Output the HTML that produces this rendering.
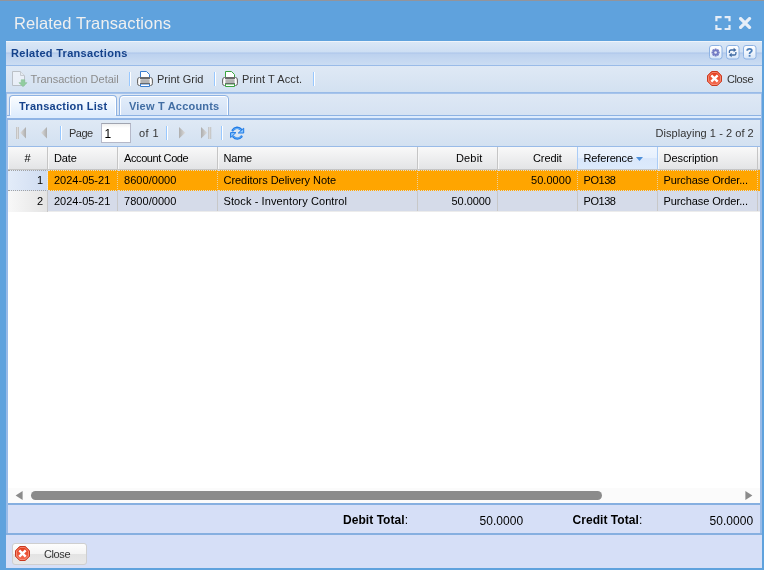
<!DOCTYPE html>
<html><head><meta charset="utf-8">
<style>
*{box-sizing:border-box;margin:0;padding:0}
html,body{width:764px;height:570px;overflow:hidden}
body{background:#5fa2dd;font-family:"Liberation Sans",sans-serif;font-size:11px;color:#000;position:relative}
.abs{position:absolute}
.t{position:absolute;white-space:nowrap;line-height:14px;height:14px;font-size:11px}
#topline{left:0;top:0;width:764px;height:1px;background:#93949b}
#title{left:15px;top:12px;font-size:16.5px;line-height:20px;height:20px;color:#f0f0f0}
#pborder{left:6px;top:41px;width:756px;height:527px;background:#99bbe8}
#phead{left:6px;top:41px;width:756px;height:25px;background:linear-gradient(#dae7f6 0,#cddef3 45%,#b4cbec 46%,#b4cbec 50%,#bcd1ee 51%,#cbddf3 100%);border-top:1px solid #eef4fb;border-bottom:1px solid #99bbe8}
#tbar{left:6px;top:66px;width:756px;height:27px;background:linear-gradient(#dfe9f5,#d3e1f1);border-bottom:1px solid #99bbe8}
.sep{position:absolute;width:2px;height:14px;border-left:1px solid #98c8ff;border-right:1px solid #fff}
#tabstrip{left:7px;top:93px;width:754px;height:26px;background:linear-gradient(#dee8f5,#d4e1f2);border-top:1px solid #a6c3eb}
#tabline{left:7px;top:115px;width:754px;height:5px;background:#deecfd;border-bottom:2px solid #8fb4e5;border-top:1px solid #8db2e3}
.tab{position:absolute;top:95px;height:21px;border:1px solid #8db2e3;border-radius:4px 4px 0 0;box-shadow:inset 1px 1px 0 #fff,inset -1px 0 0 #fff}
#tab1{left:9px;width:108px;background:linear-gradient(#fbfdff,#deecfd);height:21px;border-bottom:0}
#tab1b{left:10px;top:115px;width:106px;height:3px;background:#deecfd}
#tab2{left:119px;width:110px;background:linear-gradient(#e3edfa,#d3e2f6)}
.tabt{font-weight:bold;color:#15428b}
#pager{left:8px;top:120px;width:752px;height:27px;background:linear-gradient(#dfe9f5,#d3e1f1);border-bottom:1px solid #99bbe8}
#pinput{left:101px;top:123px;width:30px;height:20px;background:linear-gradient(#f0f0f0,#fff 4px);border:1px solid #b5b8c8;border-top-color:#a0a4b0}
#grid{left:8px;top:147px;width:752px;height:357px;background:#fff}
#ghead{left:0;top:0;width:752px;height:23px;background:linear-gradient(#f9f9f9,#e3e4e6);border-bottom:1px solid #c5c5c5}
.hc{position:absolute;top:0;height:22px;border-right:1px solid #c5c5c5;border-left:1px solid #f7f7f7}
.hc.sorted{background:linear-gradient(#eff5fe 0,#e6f0fd 50%,#d9e7fb 52%,#dceafc 100%);border-right-color:#aaccf6;border-left:1px solid #aaccf6}
.row{position:absolute;left:0;width:752px;height:21px}
.cell{position:absolute;top:0;height:21px;border-right:1px solid #c8c8c8}
.r2{height:20px}
.r2 .cell{height:20px}
.r2 .cell:first-child{height:21px}
.r2:after{content:"";position:absolute;left:40px;top:20px;width:712px;height:1px;background:#ececec}
.sel .cell{border-right:1px dotted rgba(225,225,225,.7);border-top:1px dotted #dcdcdc;border-bottom:1px dotted #dcdcdc}
.sel .cell:first-child{border-top-color:#a2a2a2;border-bottom-color:#a2a2a2}
#sum{left:8px;top:505px;width:752px;height:28px;background:#d6dff7}
#sumline{left:8px;top:503px;width:752px;height:2px;background:#86afe0}
#bbar{left:6px;top:535px;width:756px;height:33px;background:#d6dff7}
#bline{left:6px;top:533px;width:756px;height:2px;background:#86afe0}
#btn{left:12px;top:543px;width:75px;height:22px;border:1px solid #cfcfcf;border-radius:3px;background:linear-gradient(#fdfdfd 0,#f4f4f4 48%,#e3e3e3 50%,#e8e8e8 100%)}
#tx{position:absolute;left:0;top:0;width:764px;height:570px;will-change:transform}
.b{font-weight:bold}
.g{color:#333}
</style></head><body>
<div id="topline" class="abs"></div>
<div id="pborder" class="abs"></div>
<div id="phead" class="abs"></div>
<div id="tbar" class="abs"></div>
<div class="sep" style="left:129px;top:72px"></div>
<div class="sep" style="left:214px;top:72px"></div>
<div class="sep" style="left:313px;top:72px"></div>
<div id="tabstrip" class="abs"></div>
<div id="tabline" class="abs"></div>
<div id="tab1" class="tab"></div>
<div id="tab2" class="tab"></div>
<div id="tab1b" class="abs"></div>
<div id="pager" class="abs"></div>
<div class="sep" style="left:60px;top:126px"></div>
<div id="pinput" class="abs"></div>
<div class="sep" style="left:166px;top:126px"></div>
<div class="sep" style="left:221px;top:126px"></div>
<div id="grid" class="abs">
 <div id="ghead" class="abs">
  <div class="hc" style="left:0;width:40px"></div>
  <div class="hc" style="left:40px;width:70px"></div>
  <div class="hc" style="left:110px;width:100px"></div>
  <div class="hc" style="left:210px;width:200px"></div>
  <div class="hc" style="left:410px;width:80px"></div>
  <div class="hc" style="left:490px;width:80px"></div>
  <div class="hc sorted" style="left:569px;width:81px"></div>
  <div class="hc" style="left:650px;width:100px"></div>
 </div>
 <div class="row sel" style="top:23px;background:#ffa500"><div class="cell" style="left:0px;width:40px;background:linear-gradient(90deg,#e3ecf9,#cfdcf1)"></div><div class="cell" style="left:40px;width:70px"></div><div class="cell" style="left:110px;width:100px"></div><div class="cell" style="left:210px;width:200px"></div><div class="cell" style="left:410px;width:80px"></div><div class="cell" style="left:490px;width:80px"></div><div class="cell" style="left:570px;width:80px"></div><div class="cell" style="left:650px;width:100px"></div></div>
 <div class="row r2" style="top:44px;background:#d5dbe9"><div class="cell" style="left:0px;width:40px;background:linear-gradient(90deg,#f8f8f8,#e4e4e4)"></div><div class="cell" style="left:40px;width:70px"></div><div class="cell" style="left:110px;width:100px"></div><div class="cell" style="left:210px;width:200px"></div><div class="cell" style="left:410px;width:80px"></div><div class="cell" style="left:490px;width:80px"></div><div class="cell" style="left:570px;width:80px"></div><div class="cell" style="left:650px;width:100px"></div></div>
</div>



<div id="sumline" class="abs"></div>
<div id="sum" class="abs"></div>
<div id="bline" class="abs"></div>
<div id="bbar" class="abs"></div>
<div id="btn" class="abs"></div>
<svg width="0" height="0" style="position:absolute"><defs>
<linearGradient id="gPr" x1="0" x2="1" y1="0" y2="0"><stop offset="0" stop-color="#d8d8d8"/><stop offset=".14" stop-color="#ffffff"/><stop offset=".3" stop-color="#c9c9c9"/><stop offset=".7" stop-color="#c9c9c9"/><stop offset=".86" stop-color="#ffffff"/><stop offset="1" stop-color="#d0d0d0"/></linearGradient>
<linearGradient id="gRed" x1="0" x2="0" y1="0" y2="1"><stop offset="0" stop-color="#e23b1b"/><stop offset="1" stop-color="#f56c52"/></linearGradient>
<linearGradient id="gTool" x1="0" x2="0" y1="0" y2="1"><stop offset="0" stop-color="#ffffff"/><stop offset=".5" stop-color="#f1f6fd"/><stop offset="1" stop-color="#d4e4f8"/></linearGradient>
<linearGradient id="gArr" x1="0" x2="1" y1="0" y2="0"><stop offset="0" stop-color="#dcdcdc"/><stop offset="1" stop-color="#adadad"/></linearGradient>
<linearGradient id="gArrR" x1="1" x2="0" y1="0" y2="0"><stop offset="0" stop-color="#dcdcdc"/><stop offset="1" stop-color="#adadad"/></linearGradient>
<linearGradient id="gBar" x1="0" x2="1" y1="0" y2="0"><stop offset="0" stop-color="#b8b8b8"/><stop offset=".5" stop-color="#dcdcdc"/><stop offset="1" stop-color="#b8b8b8"/></linearGradient>
</defs></svg>
<!-- window tools -->
<svg class="abs" style="left:715px;top:16px" width="16" height="15" viewBox="0 0 16 15"><path d="M1.400 5.200V1.100H6.600M9.600 1.100H14.500V5.200M14.500 8.900V13H9.600M6.600 13H1.400V8.900" fill="none" stroke="#e6eef8" stroke-width="2.200"/></svg>
<svg class="abs" style="left:739px;top:17px" width="13" height="12" viewBox="0 0 13 12"><path d="M1.600 1.550L10.500 10.450M10.500 1.550L1.600 10.450" stroke="#e6eef8" stroke-width="3.300" stroke-linecap="round"/></svg>
<!-- panel tools -->
<svg class="abs" style="left:709px;top:45px" width="14" height="15" viewBox="0 0 14 15"><rect x=".5" y=".5" width="12.500" height="13.500" rx="2.500" fill="url(#gTool)" stroke="#8db2e3"/>
 <g transform="translate(6.600 7.500)"><g fill="#747cc4"><circle r="3"/><g><rect x="-1" y="-4.100" width="2" height="8.200" rx=".5"/><rect x="-4.100" y="-1" width="8.200" height="2" rx=".5"/></g><g transform="rotate(45)"><rect x="-1" y="-4.100" width="2" height="8.200" rx=".5"/><rect x="-4.100" y="-1" width="8.200" height="2" rx=".5"/></g></g><circle r="1.300" fill="#e9edf9"/></g></svg>
<svg class="abs" style="left:726px;top:45px" width="14" height="15" viewBox="0 0 14 15"><rect x=".5" y=".5" width="12.500" height="13.500" rx="2.500" fill="url(#gTool)" stroke="#8db2e3"/>
 <path d="M3.400 8V6.600Q3.400 5 5 5H8" fill="none" stroke="#3f6aa3" stroke-width="1.300"/><path d="M7.600 2.700L10.400 5L7.600 7.300Z" fill="#3f6aa3"/>
 <path d="M9.900 7V8.400Q9.900 10 8.300 10H5.300" fill="none" stroke="#3f6aa3" stroke-width="1.300"/><path d="M5.700 7.700L2.900 10L5.700 12.300Z" fill="#3f6aa3"/></svg>
<svg class="abs" style="left:743px;top:45px" width="14" height="15" viewBox="0 0 14 15"><rect x=".5" y=".5" width="12.500" height="13.500" rx="2.500" fill="url(#gTool)" stroke="#8db2e3"/>
 <path d="M4.200 5.700Q4.200 3.800 6.500 3.800Q8.800 3.800 8.800 5.600Q8.800 6.700 7.500 7.300Q6.600 7.700 6.600 8.900" fill="none" stroke="#4a7db9" stroke-width="1.800"/><rect x="5.700" y="9.900" width="1.800" height="1.800" fill="#4a7db9"/></svg>
<!-- toolbar icons -->
<svg class="abs" style="left:12px;top:71px;opacity:.5" width="16" height="17" viewBox="0 0 16 17"><path d="M.5 .5H8.500L12.500 4.500V14.500H.5Z" fill="#fbfbfd" stroke="#9c9c9c"/><path d="M8.500 .5V4.500H12.500" fill="#eee" stroke="#b0b0b0"/><path d="M9.200 8.800H12.800V11.700H15L11 15.700L7 11.700H9.200Z" fill="#4db84e" stroke="#379a3b" stroke-width=".6"/></svg>
<svg class="abs" style="left:137px;top:71px" width="16" height="16" viewBox="0 0 16 16"><path d="M3.5 7.5V.5H9.5L12.5 3.5V7.5" fill="#fff" stroke="#3b7fd0"/>
 <path d="M2.5 6.5H13.500Q15.500 6.500 15.500 9V12.500Q15.500 14.500 13.500 14.500H2.500Q.5 14.500 .5 12.500V9Q.5 6.500 2.500 6.500Z" fill="url(#gPr)" stroke="#6b6b6b"/>
 <rect x="3" y="7" width="10" height="1" fill="#6a6a6a"/>
 <rect x="3.5" y="8.500" width="9" height="3.500" fill="#b4b4b4"/>
 <path d="M3.5 13V15.500H12.500V13Z" fill="#fff" stroke="#3b7fd0"/>
 <rect x="3" y="12.200" width="10" height=".8" fill="#5a5a5a"/></svg>
<svg class="abs" style="left:222px;top:71px;color:#3aa13c" width="16" height="16" viewBox="0 0 16 16">
 <path d="M3.500 7.500V.5H9.500L12.500 3.500V7.500" fill="#fff" stroke="#3aa440"/>
 <path d="M2.500 6.500H13.500Q15.500 6.500 15.500 9V12.500Q15.500 14.500 13.500 14.500H2.500Q.5 14.500 .5 12.500V9Q.5 6.500 2.500 6.500Z" fill="url(#gPr)" stroke="#6b6b6b"/>
 <rect x="3" y="7" width="10" height="1" fill="#6a6a6a"/><rect x="3.500" y="8.500" width="9" height="3.500" fill="#b4b4b4"/>
 <path d="M3.500 13V15.500H12.500V13Z" fill="#fff" stroke="#3aa440"/><rect x="3" y="12.200" width="10" height=".8" fill="#5a5a5a"/></svg>
<svg class="abs" style="left:707px;top:71px" width="15" height="15" viewBox="0 0 15 15"><path d="M4.700 .5H10.300L14.500 4.700V10.300L10.300 14.500H4.700L.5 10.300V4.700Z" fill="url(#gRed)" stroke="#c9391f"/>
 <path d="M5.100 1.500H9.900L13.500 5.100V9.900L9.900 13.500H5.100L1.500 9.900V5.100Z" fill="none" stroke="#f79a86" stroke-opacity=".75"/>
 <path d="M4.300 4.300L10.700 10.700M10.700 4.300L4.300 10.700" stroke="#fff" stroke-width="2.400" stroke-linecap="butt"/></svg>
<svg class="abs" style="left:15px;top:546px" width="15" height="15" viewBox="0 0 15 15"><path d="M4.700 .5H10.300L14.500 4.700V10.300L10.300 14.500H4.700L.5 10.300V4.700Z" fill="url(#gRed)" stroke="#c9391f"/>
 <path d="M5.100 1.500H9.900L13.500 5.100V9.900L9.900 13.500H5.100L1.500 9.900V5.100Z" fill="none" stroke="#f79a86" stroke-opacity=".75"/>
 <path d="M4.300 4.300L10.700 10.700M10.700 4.300L4.300 10.700" stroke="#fff" stroke-width="2.400" stroke-linecap="butt"/></svg>
<!-- pager icons -->
<svg class="abs" style="left:16px;top:127px" width="11" height="12" viewBox="0 0 11 12"><rect x="0" y="0" width="3" height="12" fill="url(#gBar)"/><path d="M4.200 5.700L10 0V11.500Z" fill="url(#gArr)"/></svg>
<svg class="abs" style="left:41px;top:127px" width="7" height="12" viewBox="0 0 7 12"><path d="M0 5.700L6 0V11.500Z" fill="url(#gArr)"/></svg>
<svg class="abs" style="left:179px;top:127px" width="7" height="12" viewBox="0 0 7 12"><path d="M6.300 5.700L0 0V11.500Z" fill="url(#gArrR)"/></svg>
<svg class="abs" style="left:201px;top:127px" width="11" height="12" viewBox="0 0 11 12"><rect x="7.200" y="0" width="3" height="12" fill="url(#gBar)"/><path d="M6.200 5.700L0 0V11.500Z" fill="url(#gArrR)"/></svg>
<svg class="abs" style="left:230px;top:126px" width="15" height="15" viewBox="0 0 15 15"><g fill="none" stroke-linecap="round"><path d="M2.700 4.300A5.200 5.200 0 0 1 11.300 3.800" stroke="#1f7ae6" stroke-width="2.400"/><path d="M11.500 10.600A5.200 5.200 0 0 1 3.400 10.800" stroke="#1f7ae6" stroke-width="2.400"/><path d="M3 4.200A5.200 5.200 0 0 1 11 3.900" stroke="#6db6fb" stroke-width=".9"/><path d="M11.300 10.500A5.200 5.200 0 0 1 3.800 10.800" stroke="#6db6fb" stroke-width=".9"/></g>
<path d="M13.700 2.200V7H8.300Z" fill="#8cc6fd" stroke="#1f7ae6" stroke-width="1" stroke-linejoin="round"/><path d="M.6 11.600V6.600H5.900Z" fill="#8cc6fd" stroke="#1f7ae6" stroke-width="1" stroke-linejoin="round"/></svg>
<!-- sort arrow -->
<svg class="abs" style="left:636px;top:157px" width="7" height="4" viewBox="0 0 7 4"><path d="M0 0H7L3.500 4Z" fill="#4d8fd9"/></svg>
<!-- scrollbar -->
<div class="abs" style="left:8px;top:488px;width:752px;height:15px;background:#fbfbfb"></div>
<svg class="abs" style="left:15px;top:491px" width="8" height="9" viewBox="0 0 8 9"><path d="M.6 4.500L7.600 0V9Z" fill="#8b8b8b"/></svg>
<svg class="abs" style="left:745px;top:491px" width="8" height="9" viewBox="0 0 8 9"><path d="M7.400 4.500L.4 0V9Z" fill="#8b8b8b"/></svg>
<div class="abs" style="left:31px;top:491px;width:571px;height:9px;border-radius:4.500px;background:#8b8b8b"></div>

<div id="tx">
<div class="t" style="left:14px;top:13px;font-size:16.5px;line-height:20px;height:20px;color:#f0f0f0;letter-spacing:0.1px">Related Transactions</div>
<div class="t" style="left:11px;top:46px;font-weight:bold;color:#15428b;letter-spacing:0.3px">Related Transactions</div>
<div class="t" style="left:30.5px;top:72px;color:#8c8c8c;letter-spacing:0px">Transaction Detail</div>
<div class="t" style="left:157px;top:72px;color:#333;letter-spacing:0px">Print Grid</div>
<div class="t" style="left:242px;top:72px;color:#333;letter-spacing:0.1px">Print T Acct.</div>
<div class="t" style="left:727px;top:72px;color:#333;letter-spacing:-0.4px">Close</div>
<div class="t" style="left:19px;top:99px;font-weight:bold;color:#15428b;letter-spacing:0.25px">Transaction List</div>
<div class="t" style="left:129px;top:99px;font-weight:bold;color:#416da3;letter-spacing:0.2px">View T Accounts</div>
<div class="t" style="left:69px;top:126px;color:#333;letter-spacing:-0.5px">Page</div>
<div class="t" style="left:104.5px;top:127px;font-size:12px;letter-spacing:0px">1</div>
<div class="t" style="left:139px;top:126px;color:#333;letter-spacing:0.4px">of 1</div>
<div class="t" style="left:655.5px;top:126px;color:#333;letter-spacing:0.05px">Displaying 1 - 2 of 2</div>
<div class="t" style="left:24.5px;top:151px;letter-spacing:0px">#</div>
<div class="t" style="left:54px;top:151px;letter-spacing:-0.1px">Date</div>
<div class="t" style="left:124px;top:151px;letter-spacing:-0.4px">Account Code</div>
<div class="t" style="left:223.5px;top:151px;letter-spacing:-0.2px">Name</div>
<div class="t" style="left:456px;top:151px;letter-spacing:0.15px">Debit</div>
<div class="t" style="left:533px;top:151px;letter-spacing:-0.1px">Credit</div>
<div class="t" style="left:583.5px;top:151px;letter-spacing:-0.15px">Reference</div>
<div class="t" style="left:663.5px;top:151px;letter-spacing:-0.05px">Description</div>
<div class="t" style="left:37px;top:173px;letter-spacing:0px">1</div>
<div class="t" style="left:54px;top:173px;letter-spacing:0px">2024-05-21</div>
<div class="t" style="left:124px;top:173px;letter-spacing:0.05px">8600/0000</div>
<div class="t" style="left:223.5px;top:173px;letter-spacing:-0.05px">Creditors Delivery Note</div>
<div class="t" style="left:531px;top:173px;letter-spacing:0.05px">50.0000</div>
<div class="t" style="left:583.5px;top:173px;letter-spacing:-0.45px">PO138</div>
<div class="t" style="left:663.5px;top:173px;letter-spacing:-0.1px">Purchase Order...</div>
<div class="t" style="left:37px;top:194px;letter-spacing:0px">2</div>
<div class="t" style="left:54px;top:194px;letter-spacing:0px">2024-05-21</div>
<div class="t" style="left:124px;top:194px;letter-spacing:0.05px">7800/0000</div>
<div class="t" style="left:223.5px;top:194px;letter-spacing:0.1px">Stock - Inventory Control</div>
<div class="t" style="left:451.5px;top:194px;letter-spacing:-0.05px">50.0000</div>
<div class="t" style="left:583.5px;top:194px;letter-spacing:-0.45px">PO138</div>
<div class="t" style="left:663.5px;top:194px;letter-spacing:-0.1px">Purchase Order...</div>
<div class="t" style="left:343px;top:513px;font-size:12px;letter-spacing:0.05px"><b>Debit Total</b>:</div>
<div class="t" style="left:479.5px;top:514px;font-size:12px;letter-spacing:0.05px">50.0000</div>
<div class="t" style="left:572.5px;top:513px;font-size:12px;letter-spacing:0.05px"><b>Credit Total</b>:</div>
<div class="t" style="left:709.5px;top:514px;font-size:12px;letter-spacing:0.05px">50.0000</div>
<div class="t" style="left:44px;top:547px;color:#333;letter-spacing:-0.4px">Close</div>
</div>
</body></html>
